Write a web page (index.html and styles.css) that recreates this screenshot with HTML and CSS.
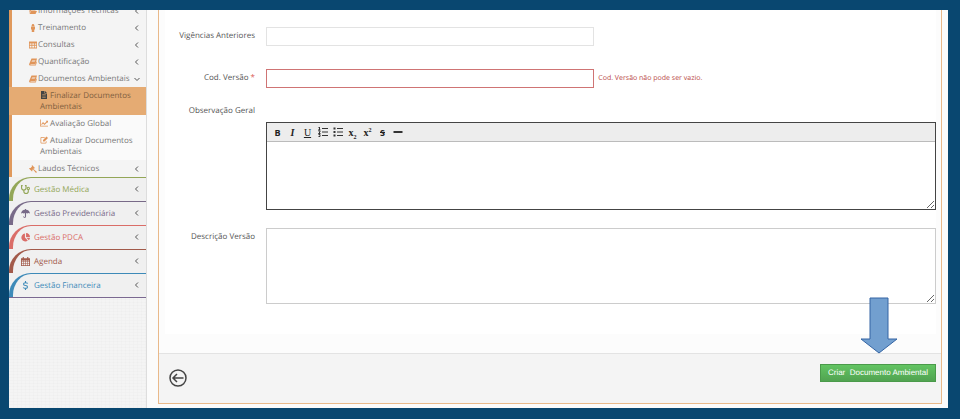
FILE: index.html
```html
<!DOCTYPE html>
<html lang="pt-BR">
<head>
  <meta charset="UTF-8">
  <meta name="viewport" content="width=device-width, initial-scale=1">
  <title>Documentos Ambientais</title>
  <link rel="stylesheet" href="styles.css">
</head>
<body>
  <div class="app">
    <nav class="sidebar">
      <ul class="submenu">
        <li><a href="#"><svg class="icon" viewBox="0 0 16 16"><path d="M1 3h5l1 2h6v2H4l-3 5zM4 8h12l-3 6H1z"/></svg>Informações Técnicas<svg class="chevron" viewBox="0 0 6 6"><path d="M4 0.5L1.5 3L4 5.5"/></svg></a></li>
        <li><a href="#"><svg class="icon" viewBox="0 0 16 16"><circle cx="8" cy="2.5" r="2.5"/><path d="M4 5h8v6h-1.500v5h-5v-5H4z"/></svg>Treinamento<svg class="chevron" viewBox="0 0 6 6"><path d="M4 0.500L1.500 3L4 5.500"/></svg></a></li>
        <li><a href="#"><svg class="icon" viewBox="0 0 16 16"><path fill-rule="evenodd" d="M0 1h16v14H0zM1.500 5v2.500H5V5zM6.500 5v2.500h3.500V5zM11.500 5v2.500h3V5zM1.500 9.500v3.500H5V9.500zM6.500 9.500v3.500h3.500V9.500zM11.500 9.500v3.500h3V9.500z"/></svg>Consultas<svg class="chevron" viewBox="0 0 6 6"><path d="M4 0.500L1.500 3L4 5.500"/></svg></a></li>
        <li><a href="#"><svg class="icon" viewBox="0 0 16 16"><path fill-rule="evenodd" d="M5 1h11l-3 11H3v1h10l2-6 1 1-2.500 7H2c-2 0-2-2-1.500-3.500zM6.500 4l-.5 1h6.500l.5-1zM5.500 7L5 8h6.500l.5-1z"/></svg>Quantificação<svg class="chevron" viewBox="0 0 6 6"><path d="M4 0.500L1.500 3L4 5.500"/></svg></a></li>
        <li><a href="#"><svg class="icon" viewBox="0 0 16 16"><path fill-rule="evenodd" d="M5 1h11l-3 11H3v1h10l2-6 1 1-2.500 7H2c-2 0-2-2-1.500-3.500zM6.500 4l-.5 1h6.500l.5-1zM5.500 7L5 8h6.500l.5-1z"/></svg>Documentos Ambientais<svg class="chevron" viewBox="0 0 6 6"><path d="M0.500 2L3 4.500L5.500 2"/></svg></a>
          <ul class="children">
            <li><a href="#" class="active"><svg class="icon" viewBox="0 0 16 16"><path fill-rule="evenodd" d="M2 0h7v5h5v11H2zM10 0l4 4h-4zM4.500 7v1h7V7zM4.500 9.500v1h7v-1zM4.500 12v1h7v-1z"/></svg> Finalizar Documentos Ambientais</a></li>
            <li><a href="#"><svg class="icon" viewBox="0 0 16 16"><path d="M0 1h1.500v12.500H16V15H0zM2.500 10.500L6 6l3 3 4-4-1.500-1.500H16V8l-1.500-1.500L9 12 6 9l-2.500 3z"/></svg> Avaliação Global</a></li>
            <li><a href="#"><svg class="icon" viewBox="0 0 16 16"><path d="M10 2H3Q1 2 1 4v9q0 2 2 2h8q2 0 2-2v-3l-1.500 1v2l-1 .5H3.500l-1-.5V4l1-.5H9zM6 8l7-7 3 3-7 7H6z"/></svg> Atualizar Documentos Ambientais</a></li>
          </ul>
        </li>
        <li><a href="#"><svg class="icon" viewBox="0 0 16 16"><path d="M6 0l6 6-1.500 1-.5-.5L9 8l7 6-2 2-6-7-1.500 1 .5 1.500L6 13 0 7l1.500-1L3 6l3-3-.5-1.500z"/></svg>Laudos Técnicos<svg class="chevron" viewBox="0 0 6 6"><path d="M4 0.500L1.500 3L4 5.500"/></svg></a></li>
      </ul>
      <ul class="modules">
        <li class="medica"><a href="#"><svg class="icon line" viewBox="0 0 16 16"><path d="M3 1H1v4q0 4 4 4t4-4V1H7M5 9v2q0 4 4 4t4-4V8"/><circle cx="13" cy="6" r="2"/></svg>Gestão Médica<svg class="chevron" viewBox="0 0 6 6"><path d="M4 0.500L1.500 3L4 5.500"/></svg></a></li>
        <li class="previdenciaria"><a href="#"><svg class="icon" viewBox="0 0 16 16"><path d="M7 0h2v1.500q6 .5 7 6.500-3-2-5 0-1-1-2-1v6q0 3-2.500 3T4 13h1.500q0 1.500 1 1.500T7 13V7q-1 0-2 1-2-2-5 0 1-6 7-6.500z"/></svg>Gestão Previdenciária<svg class="chevron" viewBox="0 0 6 6"><path d="M4 0.500L1.500 3L4 5.500"/></svg></a></li>
        <li class="pdca"><a href="#"><svg class="icon" viewBox="0 0 16 16"><path d="M7 1v7l5 5.500A7 7 0 1 1 7 1zM9 0q6.500.5 7 7H9zM9.500 8.500H16q0 2.500-2 4.500z"/></svg>Gestão PDCA<svg class="chevron" viewBox="0 0 6 6"><path d="M4 0.500L1.500 3L4 5.500"/></svg></a></li>
        <li class="agenda"><a href="#"><svg class="icon" viewBox="0 0 16 16"><path fill-rule="evenodd" d="M3 0h2v2h6V0h2v2h3v14H0V2h3zM1.500 6v2H4V6zM5 6v2h2.500V6zM8.500 6v2H11V6zM12 6v2h2.500V6zM1.500 9v2H4V9zM5 9v2h2.500V9zM8.500 9v2H11V9zM12 9v2h2.500V9zM1.500 12v2.500H4V12zM5 12v2.500h2.500V12zM8.500 12v2.500H11V12zM12 12v2.500h2.500V12z"/></svg>Agenda<svg class="chevron" viewBox="0 0 6 6"><path d="M4 0.500L1.500 3L4 5.500"/></svg></a></li>
        <li class="financeira"><a href="#"><svg class="icon line" viewBox="0 0 16 16"><path d="M12 4.500Q11 3 8 3 4.500 3 4.500 5.500T8 8t3.500 2.500T8 13q-3 0-4-1.500M8 0v3M8 13v3"/></svg>Gestão Financeira<svg class="chevron" viewBox="0 0 6 6"><path d="M4 0.500L1.500 3L4 5.500"/></svg></a></li>
      </ul>
    </nav>

    <main class="content">
      <form class="panel">
        <div class="panel-body">
          <div class="fields">
            <div class="row">
              <label for="vigencias">Vigências Anteriores</label>
              <div class="control"><input type="text" id="vigencias"></div>
            </div>
            <div class="row">
              <label for="versao">Cod. Versão <span class="required">*</span></label>
              <div class="control">
                <input type="text" id="versao" class="invalid">
                <span class="error">Cod. Versão não pode ser vazio.</span>
              </div>
            </div>
            <div class="row row-editor">
              <label for="observacao">Observação Geral</label>
              <div class="editor">
                <div class="toolbar">
                  <button type="button" aria-label="Negrito"><b>B</b></button>
                  <button type="button" aria-label="Itálico" class="serif"><b><i>I</i></b></button>
                  <button type="button" aria-label="Sublinhado" class="serif"><u>U</u></button>
                  <button type="button" aria-label="Lista numerada"><svg viewBox="0 0 10 10"><path d="M4 1.500h6M4 5h6M4 8.500h6M1.500 0v3M0.500 0.500h1M0 3h2.500M0.500 4h1.500v1l-1.500 1.500h2M0.500 7.500h1.500v2H0.500"/></svg></button>
                  <button type="button" aria-label="Lista"><svg viewBox="0 0 10 10"><path d="M4 1.500h6M4 5h6M4 8.500h6"/><path class="dots" d="M0.500 1.500h2M0.500 5h2M0.500 8.500h2"/></svg></button>
                  <button type="button" aria-label="Subscrito" class="serif"><b>x<sub>2</sub></b></button>
                  <button type="button" aria-label="Sobrescrito" class="serif"><b>x<sup>2</sup></b></button>
                  <button type="button" aria-label="Tachado"><b><s>S</s></b></button>
                  <button type="button" aria-label="Linha horizontal"><svg viewBox="0 0 10 10"><path class="dots" d="M0.500 5h9"/></svg></button>
                </div>
                <textarea id="observacao"></textarea>
              </div>
            </div>
            <div class="row">
              <label for="descricao">Descrição Versão</label>
              <textarea id="descricao" class="description"></textarea>
            </div>
          </div>
        </div>
        <div class="panel-footer">
          <a href="#" class="back" aria-label="Voltar"><svg viewBox="0 0 18 18"><circle cx="9" cy="9" r="8"/><path d="M14.500 9H4M8 5L4 9l4 4"/></svg></a>
          <div class="submit">
            <svg class="pointer" viewBox="0 0 38 57"><path d="M10 1h18v41h9L19 56 1 42h9z"/></svg>
            <button type="submit">Criar&nbsp; Documento Ambiental</button>
          </div>
        </div>
      </form>
    </main>
  </div>
</body>
</html>
```

FILE: styles.css
```css
* {
  box-sizing: border-box;
}

body {
  margin: 0;
  min-height: 100vh;
  padding: 10px 12px 11px 9px;
  background: #094770;
  font-family: "Open Sans", sans-serif;
  font-size: 8px;
  text-rendering: geometricPrecision;
  color: #555;
  display: flex;
}

.app {
  flex: 1;
  display: flex;
  background: #fbfbfb;
  overflow: hidden;
}

ul {
  list-style: none;
  margin: 0;
  padding: 0;
}

/* sidebar */
.sidebar {
  flex: 0 0 138px;
  border-right: 1px solid #ddd;
  background:
    repeating-linear-gradient(0deg, rgba(0, 0, 0, 0.01) 0 1px, transparent 1px 3px),
    repeating-linear-gradient(90deg, rgba(0, 0, 0, 0.01) 0 1px, transparent 1px 4px),
    #f4f4f4;
}

.sidebar a {
  display: flex;
  align-items: center;
  color: #777;
  text-decoration: none;
}

.icon {
  width: 8px;
  height: 8px;
  fill: #e0955a;
}

.chevron {
  width: 6px;
  height: 6px;
  margin-left: auto;
  fill: none;
  stroke: #555;
}

/* list is scrolled a little under the top edge */
.submenu {
  margin-top: -8px;
  border-left: 3px solid #e0995c;
  background: #f4f4f4;
}

.submenu a {
  height: 17px;
  padding: 0 6px 0 17px;
  gap: 1px;
}

.submenu .children a {
  display: block;
  height: auto;
  padding: 3px 10px 3px 28px;
  line-height: 11px;
}

.children {
  background: #fafafa;
}

.children .icon {
  vertical-align: -1px;
}

.submenu .children .active {
  margin-left: -3px;
  padding-left: 31px;
  background: #e5ab73;
  color: #80603f;
}

.active .icon {
  fill: #444;
}

.modules {
  background: #f0f0f0;
  border-bottom: 1px solid #7a6890;
}

.modules li {
  border-top: 1px solid;
  border-left: 4px solid;
  border-radius: 22px 0 0 0;
  background: #f0f0f0;
}

.modules a {
  height: 23px;
  padding: 0 6px 1px 8px;
  gap: 4px;
  color: inherit;
}

.modules .icon {
  width: 9px;
  height: 9px;
  fill: currentColor;
}

.modules .line {
  fill: none;
  stroke: currentColor;
  stroke-width: 2;
}

.medica {
  color: #93a657;
}

.previdenciaria {
  color: #786a88;
}

.pdca {
  color: #da6d68;
}

.agenda {
  color: #a25a4a;
}

.financeira {
  color: #3d8ab8;
}

/* form panel */
.content {
  flex: 1;
  min-width: 0;
  display: flex;
  padding: 0 6px 4px 11px;
}

.panel {
  flex: 1;
  display: flex;
  flex-direction: column;
  border: 1px solid #e9b98a;
  border-top: 0;
  background: #fcfcfc;
}

.panel-body {
  flex: 1;
  padding: 0 5px 19px 6px;
}

.fields {
  display: flex;
  flex-direction: column;
  padding: 17px 0 30px;
  background: #fff;
}

.row {
  display: grid;
  grid-template-columns: 90px 1fr;
  column-gap: 11px;
  align-items: start;
  margin-bottom: 23px;
}

.row-editor {
  margin: -9px 0 18px;
}

.row:last-child {
  margin-bottom: 0;
}

label {
  line-height: 18px;
  text-align: right;
}

.required {
  color: #d9534f;
}

.control {
  display: flex;
  align-items: center;
  gap: 4px;
}

input {
  width: 49%;
  height: 19px;
  padding: 0 4px;
  border: 1px solid #e3e3e3;
  background: #fff;
  font: inherit;
}

.invalid {
  border-color: #cf7474;
}

.error {
  font-size: 7px;
  color: #b94a48;
}

textarea {
  display: block;
  width: 100%;
  padding: 4px;
  border: 1px solid #ccc;
  background: #fff;
  font: inherit;
  resize: vertical;
}

.description {
  height: 76px;
}

.editor {
  margin-top: 20px;
  border: 1px solid #444;
}

.editor textarea {
  height: 67px;
  border: 0;
}

.toolbar {
  display: flex;
  align-items: center;
  height: 19px;
  padding: 0 3px;
  border-bottom: 1px solid #bbb;
  background: #ededed;
}

.toolbar button {
  display: flex;
  align-items: center;
  justify-content: center;
  width: 15px;
  height: 18px;
  padding: 0;
  border: 0;
  background: none;
  font: inherit;
  font-size: 9px;
  color: #222;
}

.toolbar svg {
  width: 10px;
  height: 10px;
  fill: none;
  stroke: #333;
}

.toolbar .dots {
  stroke-width: 2;
}

.toolbar .serif {
  font-family: "Liberation Serif", serif;
  font-size: 10px;
}

.toolbar sub,
.toolbar sup {
  font-size: 6px;
  line-height: 0;
}

.panel-footer {
  display: flex;
  align-items: center;
  justify-content: space-between;
  height: 50px;
  padding: 0 5px 2px 10px;
  border-top: 1px solid #e3e3e3;
  background: #f4f4f4;
}

.back svg {
  display: block;
  width: 18px;
  height: 18px;
  fill: none;
  stroke: #444;
  stroke-width: 1.5;
}

.submit {
  position: relative;
  margin-bottom: 10px;
}

.submit button {
  display: block;
  height: 18px;
  padding: 0 7px;
  border: 1px solid #4a9a4a;
  background: linear-gradient(#62c462, #51a351);
  color: #fff;
  font-family: "Liberation Sans", sans-serif;
  font-size: 8px;
  text-rendering: inherit;
}

.pointer {
  position: absolute;
  right: 38px;
  bottom: 28px;
  width: 38px;
  height: 57px;
  fill: #729fcf;
  stroke: #3465a4;
}
```
